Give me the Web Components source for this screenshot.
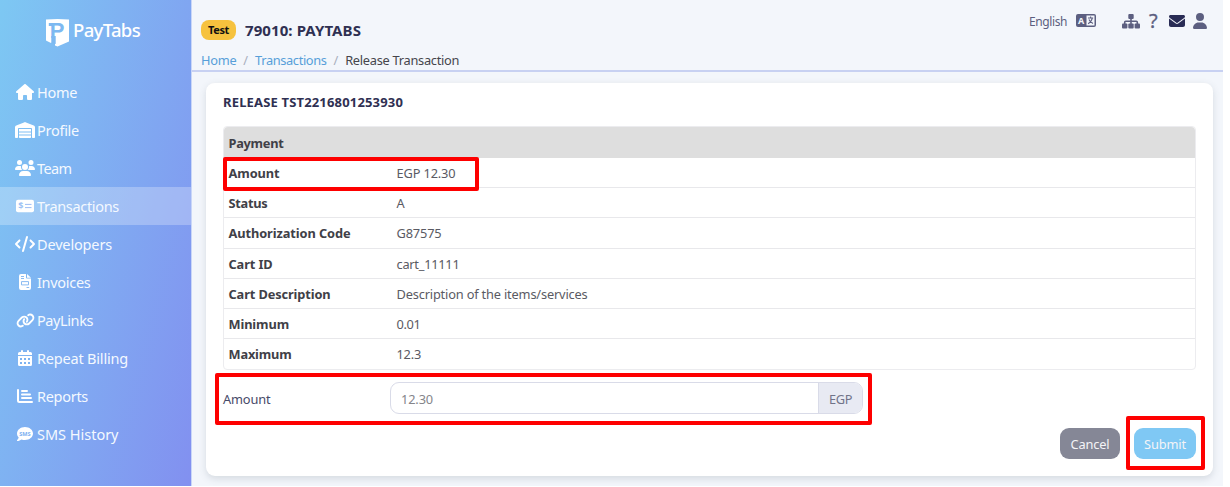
<!DOCTYPE html>
<html lang="en">
<head>
<meta charset="utf-8">
<title>Release Transaction</title>
<style>
    body {
        margin: 0; background: #fff; color: #45454c; overflow: hidden;
        font-family: "Noto Sans", "Open Sans", sans-serif; font-size: 12.8px;
    }
</style>
</head>
<body>
<pt-shell>
    <pt-sidebar slot="side">
        <pt-nav icon="home" w="40">Home</pt-nav>
        <pt-nav icon="profile" w="42">Profile</pt-nav>
        <pt-nav icon="team" w="34.5">Team</pt-nav>
        <pt-nav icon="card" w="82" active>Transactions</pt-nav>
        <pt-nav icon="code" w="75">Developers</pt-nav>
        <pt-nav icon="invoice" w="53.5">Invoices</pt-nav>
        <pt-nav icon="link" w="56">PayLinks</pt-nav>
        <pt-nav icon="calendar" w="91">Repeat Billing</pt-nav>
        <pt-nav icon="chart" w="51">Reports</pt-nav>
        <pt-nav icon="sms" w="81.5">SMS History</pt-nav>
    </pt-sidebar>
    <pt-header slot="head"></pt-header>
    <pt-card>
        <fit-text slot="title" w="180">RELEASE TST2216801253930</fit-text>
        <pt-table>
            <fit-text slot="caption" w="55">Payment</fit-text>
            <pt-row label="Amount" lw="51" value="EGP 12.30" vw="59" marked></pt-row>
            <pt-row label="Status" lw="39" value="A" vw="9"></pt-row>
            <pt-row label="Authorization Code" lw="122" value="G87575" vw="45"></pt-row>
            <pt-row label="Cart ID" lw="44" value="cart_11111" vw="63"></pt-row>
            <pt-row label="Cart Description" lw="102" value="Description of the items/services" vw="191"></pt-row>
            <pt-row label="Minimum" lw="60.5" value="0.01" vw="24"></pt-row>
            <pt-row label="Maximum" lw="63" value="12.3" vw="24.5"></pt-row>
        </pt-table>
        <pt-amount slot="form"></pt-amount>
        <pt-button slot="actions"><fit-text w="39">Cancel</fit-text></pt-button>
        <pt-button slot="actions" primary><fit-text w="42">Submit</fit-text></pt-button>
    </pt-card>
</pt-shell>

<script>
    const icons = {
        home: ['0 0 576 512', 18, 16, '<path d="M575.8 255.5c0 18-15 32.1-32 32.1l-32 0 .7 160.2c0 2.7-.2 5.4-.5 8.1l0 16.2c0 22.1-17.9 40-40 40l-16 0-39.3 0-24 0c-22.1 0-40-17.9-40-40l0-24 0-64c0-17.7-14.3-32-32-32l-64 0c-17.7 0-32 14.3-32 32l0 64 0 24c0 22.1-17.9 40-40 40l-24 0-56 0c-22.1 0-40-17.9-40-40l0-112 0-72.5-32 0c-18 0-32-14-32-32.1c0-9 3-17 10-24L266.4 8c7-7 15-8 22-8s15 2 21 7L564.8 231.5c8 7 12 15 11 24z"/>'],
        profile: ['0 0 640 512', 20, 16, '<path d="M0 488L0 171.3c0-26.2 15.9-49.7 40.2-59.4L308.1 4.8c7.6-3.1 16.1-3.1 23.8 0L599.8 111.9c24.3 9.7 40.2 33.3 40.2 59.4L640 488c0 13.3-10.7 24-24 24l-48 0c-13.3 0-24-10.7-24-24l0-264c0-17.7-14.3-32-32-32l-384 0c-17.7 0-32 14.3-32 32l0 264c0 13.3-10.7 24-24 24l-48 0c-13.3 0-24-10.7-24-24zm488 24l-336 0c-13.3 0-24-10.7-24-24l0-56 384 0 0 56c0 13.3-10.7 24-24 24zM128 400l0-64 384 0 0 64-384 0zm0-96l0-80 384 0 0 80-384 0z"/>'],
        team: ['0 0 640 512', 20, 16, '<path d="M144 0a80 80 0 1 1 0 160A80 80 0 1 1 144 0zM512 0a80 80 0 1 1 0 160A80 80 0 1 1 512 0zM0 298.7C0 239.8 47.8 192 106.7 192l42.7 0c15.9 0 31 3.5 44.6 9.7c-1.3 7.2-1.9 14.7-1.9 22.3c0 38.2 16.8 72.5 43.3 96L21.3 320C9.6 320 0 310.4 0 298.7zM405.3 320c26-23.5 42.7-57.8 42.7-96c0-7.6-.7-15-1.9-22.3c13.6-6.3 28.7-9.7 44.6-9.7l42.7 0C592.2 192 640 239.8 640 298.7c0 11.8-9.6 21.3-21.3 21.3l-213.3 0zM224 224a96 96 0 1 1 192 0 96 96 0 1 1 -192 0zM128 485.3C128 411.7 187.7 352 261.3 352l117.3 0C452.3 352 512 411.7 512 485.3c0 14.7-11.9 26.7-26.7 26.7l-330.7 0c-14.7 0-26.7-11.9-26.7-26.7z"/>'],
        card: ['0 0 18 14', 18, 14, '<rect y=".8" width="18" height="12.4" rx="2"/><text x="2.2" y="10.3" font-size="9" font-weight="700" fill="#9dc2f4">$</text><path d="M9 5.4h6.5M9 8.6h6.5" stroke="#9dbdf4"/>'],
        code: ['0 0 640 512', 20, 16, '<path d="M392.8 1.2c-17-4.9-34.7 5-39.6 22l-128 448c-4.9 17 5 34.7 22 39.6s34.7-5 39.6-22l128-448c4.9-17-5-34.7-22-39.6zm80.6 120.1c-12.5 12.5-12.5 32.8 0 45.3L562.7 256l-89.4 89.4c-12.5 12.5-12.5 32.8 0 45.3s32.8 12.5 45.3 0l112-112c12.5-12.5 12.5-32.8 0-45.3l-112-112c-12.5-12.5-32.8-12.5-45.3 0zm-306.7 0c-12.5-12.5-32.8-12.5-45.3 0l-112 112c-12.5 12.5-12.5 32.8 0 45.3l112 112c12.5 12.5 32.8 12.5 45.3 0s12.5-32.8 0-45.3L77.3 256l89.4-89.4c12.5-12.5 12.5-32.8 0-45.3z"/>'],
        invoice: ['0 0 12 16', 12, 16, '<path d="M2 0h5v3.5q0 1 1 1h4V14q0 2-2 2H2q-2 0-2-2V2Q0 0 2 0zM8 0l4 3.7H8z"/><path d="M2 2.5h3M2 4.5h3M7.5 13.5h2.7M2.5 7.6h7v3.3h-7z" fill="none" stroke="#7db3f1" stroke-width=".9"/>'],
        link: ['0 0 640 512', 19, 15, '<path d="M579.8 267.7c56.5-56.5 56.5-148 0-204.5c-50-50-128.8-56.5-186.3-15.4l-1.6 1.1c-14.4 10.3-17.7 30.3-7.4 44.6s30.3 17.7 44.6 7.4l1.6-1.1c32.1-22.9 76-19.3 103.8 8.6c31.5 31.5 31.5 82.5 0 114L422.3 334.8c-31.5 31.5-82.5 31.5-114 0c-27.9-27.9-31.5-71.8-8.6-103.8l1.1-1.6c10.3-14.4 6.9-34.4-7.4-44.6s-34.4-6.9-44.6 7.4l-1.1 1.6C206.5 251.2 213 330 263 380c56.5 56.5 148 56.5 204.5 0L579.8 267.7zM60.2 244.3c-56.5 56.5-56.5 148 0 204.5c50 50 128.8 56.5 186.3 15.4l1.6-1.1c14.4-10.3 17.7-30.3 7.4-44.6s-30.3-17.7-44.6-7.4l-1.6 1.1c-32.1 22.9-76 19.3-103.8-8.6C74 372 74 321 105.5 289.5L217.7 177.2c31.5-31.5 82.5-31.5 114 0c27.9 27.9 31.5 71.8 8.6 103.9l-1.1 1.6c-10.3 14.4-6.9 34.4 7.4 44.6s34.4 6.9 44.6-7.4l1.1-1.6C433.5 260.8 427 182 377 132c-56.5-56.5-148-56.5-204.5 0L60.2 244.3z"/>'],
        calendar: ['0 0 14 16', 14, 16, '<path d="M3 1a1 1 0 0 1 2 0v1h4V1a1 1 0 0 1 2 0v1h1.5q1.5 0 1.5 1.5V5H0V3.5Q0 2 1.5 2H3zM0 6h14v8.5q0 1.5-1.5 1.5h-11Q0 16 0 14.5z"/><path d="M2 8h2v2H2zM6 8h2v2H6zM10 8h2v2h-2zM2 12h2v2H2zM6 12h2v2H6zM10 12h2v2h-2z" fill="#7db3f1"/>'],
        chart: ['0 0 16 16', 16, 16, '<path d="M1 2v10.5q0 1.5 1.5 1.5H15M5 3h5M5 6.5h8M5 10h9" fill="none" stroke="currentColor" stroke-width="2" stroke-linecap="round"/>'],
        sms: ['0 0 16 16', 16, 16, '<path d="M8 1c4.4 0 8 2.9 8 6.5S12.4 14 8 14c-1.3 0-2.5-.2-3.5-.6C3.4 14.2 1.9 15 .5 15c-.6 0-.7-.6-.3-1 .8-.9 1.3-1.9 1.5-2.6C.6 10.4 0 9 0 7.5 0 3.9 3.6 1 8 1z"/><text x="8" y="9.5" text-anchor="middle" font-size="5.6" font-weight="700" fill="#7db0f1">SMS</text>'],
        language: ['0 0 20 13', 20, 13, '<rect width="20" height="13" rx="2"/><path d="M10.5 1.5h8v10h-8z" fill="#f3f6fb"/><text x="2" y="9.8" font-size="9" font-weight="700" fill="#f3f6fb">A</text><path d="M12 4h5.2M14.6 2.6V4M16.3 4c-.5 2.8-2 4.5-4.2 5.7M13 5.5c.8 2 2 3.2 4 4" fill="none" stroke="currentColor" stroke-width="1.1"/>'],
        sitemap: ['0 0 18 15', 18, 15, '<rect x="6.3" y="0" width="5.4" height="5" rx="1"/><rect x="0" y="9.5" width="5.4" height="5" rx="1"/><rect x="6.3" y="9.5" width="5.4" height="5" rx="1"/><rect x="12.6" y="9.5" width="5.4" height="5" rx="1"/><path d="M9 4v7M2.7 11V8.3Q2.7 7.2 3.7 7.2h10.6q1 0 1 1V11" fill="none" stroke="currentColor" stroke-width="1.6"/>'],
        envelope: ['0 64 512 384', 16, 12, '<path d="M48 64C21.5 64 0 85.5 0 112c0 15.1 7.1 29.3 19.2 38.4L236.8 313.6c11.4 8.5 27 8.5 38.4 0L492.8 150.4c12.1-9.1 19.2-23.3 19.2-38.4c0-26.5-21.5-48-48-48L48 64zM0 176L0 384c0 35.3 28.7 64 64 64l384 0c35.3 0 64-28.7 64-64l0-208L294.4 339.2c-22.8 17.1-54 17.1-76.8 0L0 176z"/>'],
        user: ['0 0 448 512', 14, 16, '<path d="M224 256A128 128 0 1 0 224 0a128 128 0 1 0 0 256zm-45.7 48C79.8 304 0 383.8 0 482.3C0 498.7 13.3 512 29.7 512l388.6 0c16.4 0 29.7-13.3 29.7-29.7C448 383.8 368.2 304 269.7 304l-91.4 0z"/>'],
    };

    class PtIcon extends HTMLElement {
        connectedCallback() {
            const [box, width, height, body] = icons[this.getAttribute('name')];
            this.attachShadow({mode: 'open'}).innerHTML = `
                <style>
                    :host { display: inline-flex; flex: none; }
                    svg { display: block; flex: none; fill: currentColor; overflow: visible; }
                </style>
                <svg viewBox="${box}" width="${width}" height="${height}">${body}</svg>
            `;
        }
    }

    // One line of text tracked so that it takes up the width given in "w".
    class FitText extends HTMLElement {
        constructor() {
            super();
            this.attachShadow({mode: 'open'}).innerHTML = `
                <style>
                    :host { display: block; flex: none; white-space: nowrap; line-height: 20px; }
                </style>
                <slot></slot>
            `;
        }

        fit() {
            const target = parseFloat(this.getAttribute('w'));
            const length = this.textContent.length;
            const range = document.createRange();
            range.selectNodeContents(this);
            const natural = range.getBoundingClientRect().width;
            if (natural && length) this.style.letterSpacing = `${(target - natural) / length}px`;
        }
    }

    class PtShell extends HTMLElement {
        constructor() {
            super();
            this.attachShadow({mode: 'open'}).innerHTML = `
                <style>
                    :host {
                        display: grid; grid-template-columns: 192px 1fr; width: 1223px; height: 486px;
                        background: #f3f6fb; overflow: hidden;
                    }
                    main { display: flex; flex-direction: column; min-width: 0; }
                </style>
                <slot name="side"></slot>
                <main><slot name="head"></slot><slot></slot></main>
            `;
        }
    }

    class PtSidebar extends HTMLElement {
        constructor() {
            super();
            this.attachShadow({mode: 'open'}).innerHTML = `
                <style>
                    :host {
                        display: flex; flex-direction: column; box-sizing: border-box; color: #fff;
                        background: linear-gradient(104deg, #7dc8f3, #8290f0);
                        border-right: 1px solid #c9d6f8;
                    }
                    .brand { display: flex; align-items: center; gap: 4px; height: 73px; padding: 0 0 8px 46px; box-sizing: border-box; }
                    .brand fit-text { font-size: 18.5px; font-weight: 500; margin-top: -6px; }
                    svg { display: block; flex: none; overflow: visible; }
                    nav { display: flex; flex-direction: column; }
                </style>
                <div class="brand">
                    <svg width="23" height="28" viewBox="0 0 23 28">
                        <path fill="#fff" d="M0 .5Q11.5-.5 23 .5V22.5L11.5 27.5 9 26.5V22L5 24 0 21.5z"/>
                        <text x="3.8" y="19" font-family="Liberation Sans, sans-serif" font-size="22" font-weight="700" fill="#7db9f1">P</text>
                        <path fill="#7db9f1" d="M2.8 3.9h4v3h-4zM5.3 17h4.4v8l-4.4-1z"/>
                    </svg>
                    <fit-text w="67">PayTabs</fit-text>
                </div>
                <nav><slot></slot></nav>
            `;
        }
    }

    class PtNav extends HTMLElement {
        connectedCallback() {
            this.attachShadow({mode: 'open'}).innerHTML = `
                <style>
                    :host {
                        display: grid; grid-template-columns: 20px auto; gap: 2px; align-items: center; justify-content: start;
                        box-sizing: border-box; height: 38.05px; padding-left: 15px; font-size: 14.5px; color: #f4f9ff;
                    }
                    :host([active]) { background: rgba(255, 255, 255, .26); }
                    pt-icon { justify-self: center; color: #fff; }
                </style>
                <pt-icon name="${this.getAttribute('icon')}"></pt-icon>
                <fit-text w="${this.getAttribute('w')}">${this.textContent}</fit-text>
            `;
        }
    }

    class PtHeader extends HTMLElement {
        constructor() {
            super();
            this.attachShadow({mode: 'open'}).innerHTML = `
                <style>
                    :host {
                        display: flex; justify-content: space-between; box-sizing: border-box; flex: none;
                        height: 72px; padding: 12px 16px 0 9px; border-bottom: 2px solid #c8d1f2;
                    }
                    .account { display: flex; align-items: center; gap: 9px; height: 36px; }
                    .badge {
                        display: flex; align-items: center; justify-content: center; width: 35px; height: 20px;
                        border-radius: 8px; background: #f6c23e; color: #111; font-size: 11px; font-weight: 700;
                    }
                    .name { font-size: 15px; font-weight: 700; color: #2f3052; }
                    .crumbs { display: flex; gap: 6.8px; height: 20px; margin-top: 2px; font-size: 12.8px; }
                    a { color: #579fd9; text-decoration: none; }
                    .sep { color: #a9afbd; }
                    .tools { display: flex; align-items: center; height: 18px; color: #5c5f80; font-size: 12px; }
                    .tools fit-text:first-child { margin: 1px 0 0 1px; }
                    .lang { margin: -1px 26px 0 9px; }
                    .dark { color: #292c55; margin: -1px 8px 0 9px; }
                    .help { margin: -1px 0 0 9px; font-size: 20px; width: 11px; -webkit-text-stroke: .3px #5c5f80; }
                </style>
                <div>
                    <div class="account">
                        <span class="badge"><fit-text w="21">Test</fit-text></span>
                        <fit-text class="name" w="116">79010: PAYTABS</fit-text>
                    </div>
                    <div class="crumbs">
                        <a href="#"><fit-text w="35.5">Home</fit-text></a><span class="sep"><fit-text w="5">/</fit-text></span>
                        <a href="#"><fit-text w="71.5">Transactions</fit-text></a><span class="sep"><fit-text w="5">/</fit-text></span>
                        <fit-text w="114">Release Transaction</fit-text>
                    </div>
                </div>
                <div class="tools">
                    <fit-text w="38">English</fit-text>
                    <pt-icon class="lang" name="language"></pt-icon>
                    <pt-icon name="sitemap"></pt-icon>
                    <fit-text class="help" w="11">?</fit-text>
                    <pt-icon class="dark" name="envelope"></pt-icon>
                    <pt-icon name="user"></pt-icon>
                </div>
            `;
        }
    }

    class PtCard extends HTMLElement {
        constructor() {
            super();
            this.attachShadow({mode: 'open'}).innerHTML = `
                <style>
                    :host {
                        display: flex; flex-direction: column; box-sizing: border-box; width: 1007px; height: 394px;
                        margin: 10px 0 0 14px; padding: 9px 17px 0; border-radius: 9px; background: #fff;
                        border-top: 1px solid #edf0f4; box-shadow: 0 3px 7px rgba(70, 90, 100, .17);
                    }
                    .title { display: flex; flex: none; height: 34px; font-size: 13px; font-weight: 700; color: #2f3052; }
                    .actions { display: flex; justify-content: flex-end; gap: 14px; margin-top: 14px; }
                </style>
                <div class="title"><slot name="title"></slot></div>
                <slot></slot>
                <slot name="form"></slot>
                <div class="actions"><slot name="actions"></slot></div>
            `;
        }
    }

    class PtTable extends HTMLElement {
        constructor() {
            super();
            this.attachShadow({mode: 'open'}).innerHTML = `
                <style>
                    :host {
                        display: block; box-sizing: border-box; height: 244px; flex: none;
                        border: 1px solid #ececef; border-radius: 4px;
                    }
                    .caption {
                        display: flex; align-items: center; height: 31px; padding-left: 4.5px; box-sizing: border-box;
                        background: #dedede; border-radius: 4px 4px 0 0; font-weight: 700; color: #404047;
                    }
                </style>
                <div class="caption"><slot name="caption"></slot></div>
                <slot></slot>
            `;
        }
    }

    class PtRow extends HTMLElement {
        connectedCallback() {
            this.attachShadow({mode: 'open'}).innerHTML = `
                <style>
                    :host {
                        display: grid; grid-template-columns: 168px auto; align-items: center; justify-content: start;
                        position: relative; box-sizing: border-box; height: 30.2px; padding: .8px 0 0 4.5px;
                        border-bottom: 1px solid #e8e8eb;
                    }
                    :host(:last-of-type) { border-bottom-color: transparent; }
                    .label { font-weight: 700; color: #404047; }
                    .value { color: #5a5a63; }
                    .mark {
                        position: absolute; left: -1px; top: -1px; width: 256px; height: 34px; z-index: 1;
                        box-sizing: border-box; border: 4px solid #fe0000; border-radius: 2px;
                    }
                </style>
                <fit-text class="label" w="${this.getAttribute('lw')}">${this.getAttribute('label')}</fit-text>
                <fit-text class="value" w="${this.getAttribute('vw')}">${this.getAttribute('value')}</fit-text>
                ${this.hasAttribute('marked') ? '<span class="mark"></span>' : ''}
            `;
        }
    }

    class PtAmount extends HTMLElement {
        constructor() {
            super();
            this.attachShadow({mode: 'open'}).innerHTML = `
                <style>
                    :host {
                        display: grid; grid-template-columns: 167px 473px; align-items: center; position: relative;
                        height: 32px; margin-top: 12px; flex: none; color: #474a68;
                    }
                    fit-text { padding-top: 1px; }
                    .group {
                        display: flex; box-sizing: border-box; height: 32px; overflow: hidden;
                        border: 1px solid #d9dbe8; border-radius: 9px;
                    }
                    .field { flex: 1; display: flex; align-items: center; padding-left: 10px; color: #85858b; }
                    .unit {
                        display: flex; align-items: center; justify-content: center; width: 43px;
                        border-left: 1px solid #d9dbe8; background: #e8eaf3; color: #707389;
                    }
                    .mark {
                        position: absolute; left: -8px; top: -9px; width: 657px; height: 52px;
                        box-sizing: border-box; border: 4px solid #fe0000; border-radius: 2px;
                    }
                </style>
                <fit-text w="47.5">Amount</fit-text>
                <div class="group">
                    <div class="field"><fit-text w="32">12.30</fit-text></div>
                    <div class="unit"><fit-text w="23">EGP</fit-text></div>
                </div>
                <span class="mark"></span>
            `;
        }
    }

    class PtButton extends HTMLElement {
        connectedCallback() {
            this.attachShadow({mode: 'open'}).innerHTML = `
                <style>
                    :host {
                        display: flex; align-items: center; justify-content: center; position: relative;
                        width: 60px; height: 31px; border-radius: 9px; background: #858796; color: #f4f4f7;
                    }
                    :host([primary]) { width: 62px; background: #7fc8f4; }
                    .mark {
                        position: absolute; left: -8px; top: -12px; width: 79px; height: 54px;
                        box-sizing: border-box; border: 4px solid #fe0000; border-radius: 2px;
                    }
                </style>
                <slot></slot>
                ${this.hasAttribute('primary') ? '<span class="mark"></span>' : ''}
            `;
        }
    }

    customElements.define('pt-icon', PtIcon);
    customElements.define('fit-text', FitText);
    customElements.define('pt-shell', PtShell);
    customElements.define('pt-sidebar', PtSidebar);
    customElements.define('pt-nav', PtNav);
    customElements.define('pt-header', PtHeader);
    customElements.define('pt-card', PtCard);
    customElements.define('pt-table', PtTable);
    customElements.define('pt-row', PtRow);
    customElements.define('pt-amount', PtAmount);
    customElements.define('pt-button', PtButton);

    const fitAll = (root) => {
        root.querySelectorAll('*').forEach((node) => {
            if (node instanceof FitText) node.fit();
            else if (node.shadowRoot) fitAll(node.shadowRoot);
        });
    };
    fitAll(document);
</script>
</body>
</html>
